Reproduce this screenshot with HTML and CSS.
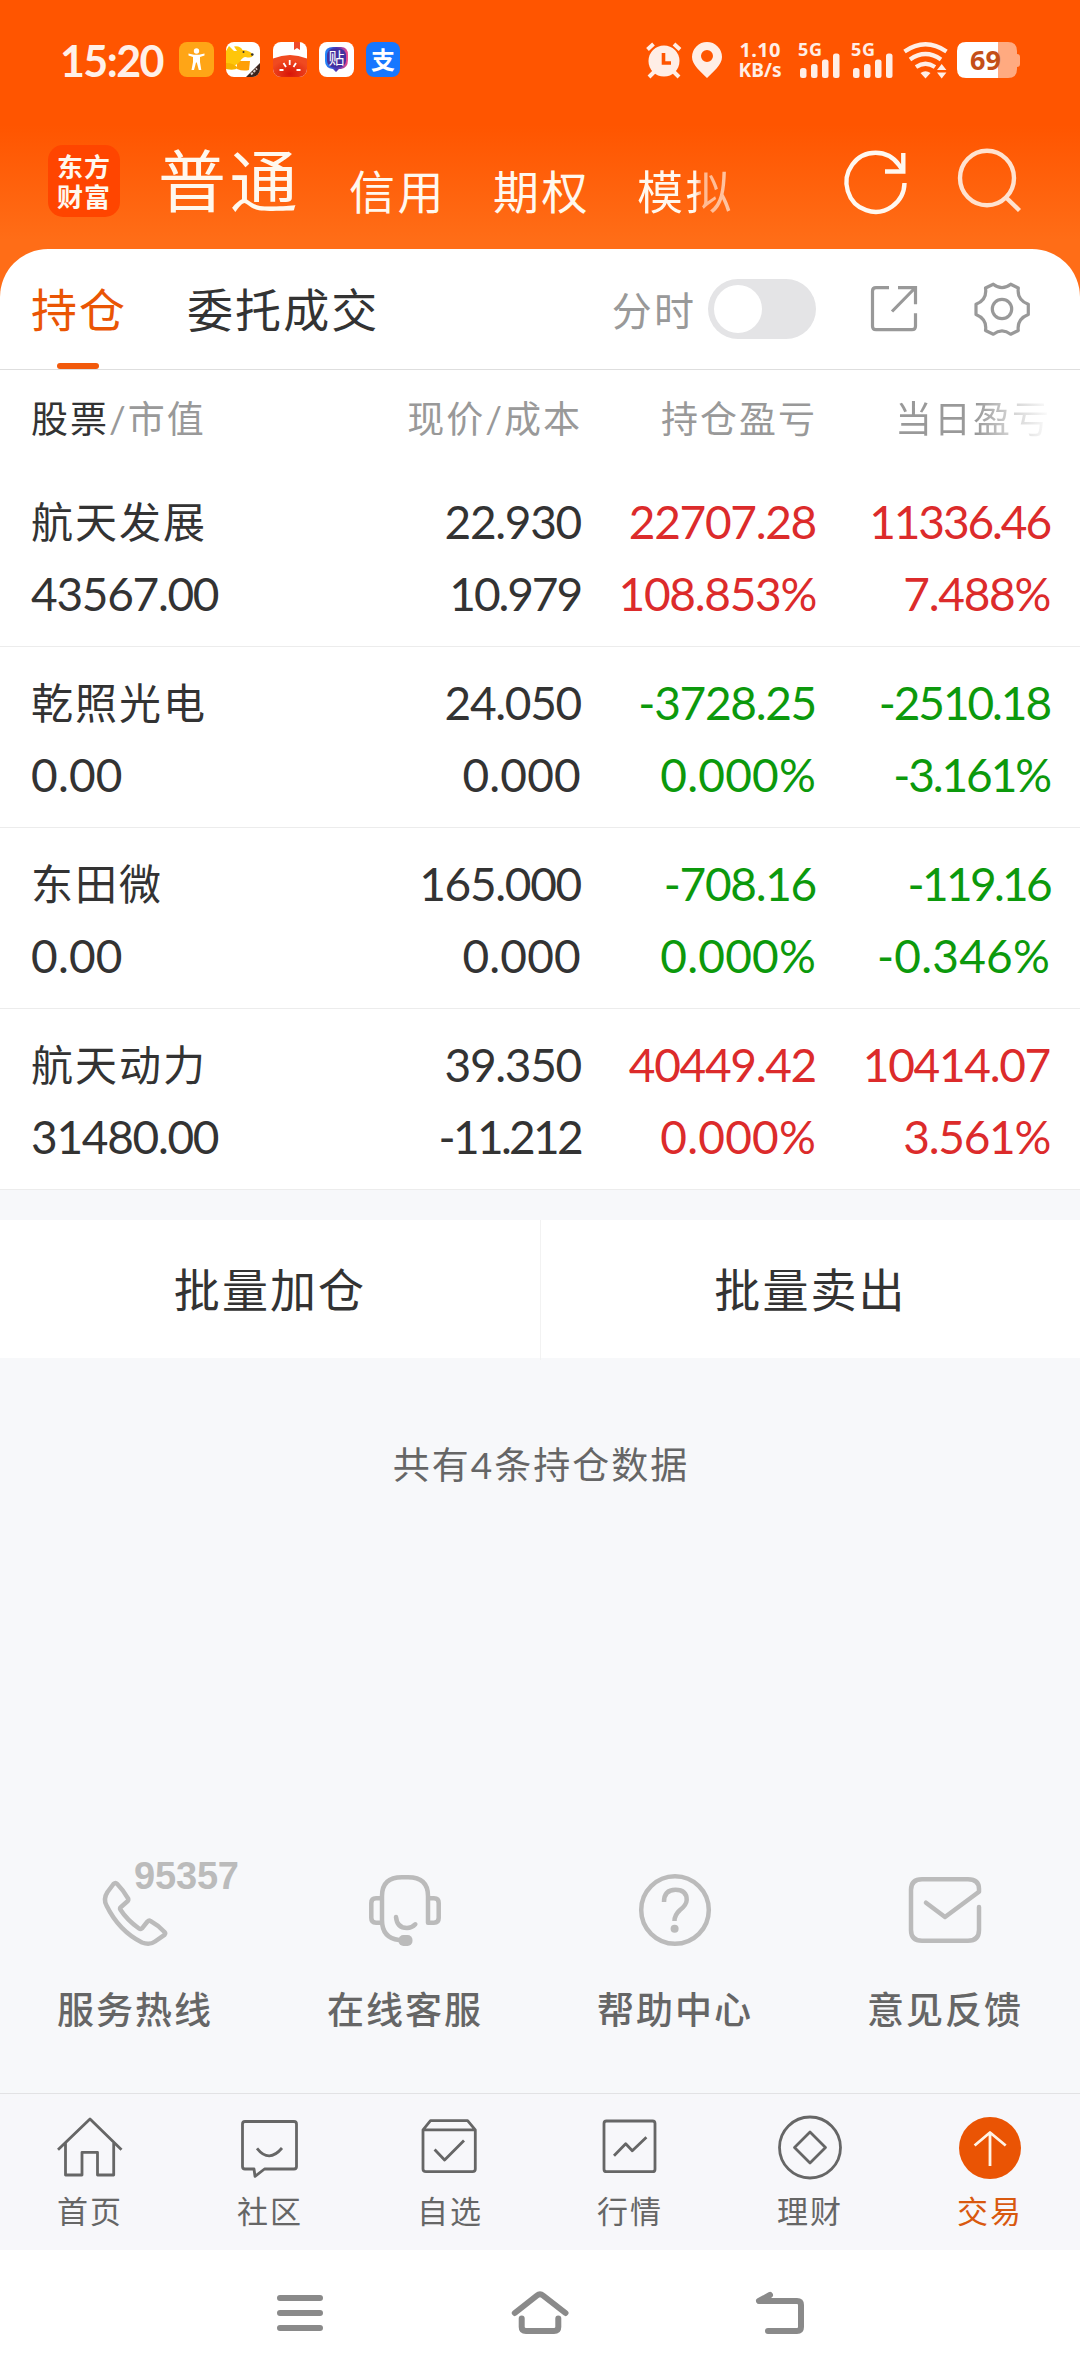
FILE: index.html
```html
<!DOCTYPE html>
<html lang="zh-CN">
<head>
<meta charset="utf-8">
<title>持仓</title>
<link rel="stylesheet" href="styles.css">
</head>
<body>
<div class="phone">
  <header class="top">
    <div class="status">
      <span class="time">15:20</span>
      <svg class="apps" viewBox="179 42 222 36" width="222" height="36">
        <defs>
          <clipPath id="c1"><rect x="226" y="42" width="34" height="35" rx="8"/></clipPath>
          <clipPath id="c2"><rect x="273" y="42" width="34" height="35" rx="8"/></clipPath>
          <linearGradient id="g1" x1="0" y1="0" x2="1" y2="0"><stop offset="0" stop-color="#1f8cff"/><stop offset=".5" stop-color="#4a35b5"/><stop offset="1" stop-color="#f04a8c"/></linearGradient>
          <radialGradient id="g2" cx=".5" cy=".8" r=".6"><stop offset="0" stop-color="#d81508"/><stop offset="1" stop-color="#f04a20"/></radialGradient>
        </defs>
        <rect x="179" y="42" width="35" height="35" rx="8" fill="#ffa516"/>
        <circle cx="196.500" cy="51" r="2.700" fill="#fff"/>
        <path d="M188.500 53.500l5.500 1.300h5l5.500-1.300v2l-4.500 1.500v5l1.300 8h-2.500l-2-7.500h-.800l-2 7.500h-2.500l1.500-8v-5l-4.500-1.500z" fill="#fff"/>
        <g clip-path="url(#c1)">
          <rect x="226" y="42" width="34" height="35" fill="#fff"/>
          <path d="M237 61h13l-1 9q-6 1.500-12-1z" fill="#ffa008"/>
          <path d="M226 51l3-5 5 5 3 0-3-4.500q6-1 8.500 3.500 9 .500 10.500 5.500-1 3-7.500 1.500-3 0-5.500 4.500-4 5-14 5.500z" fill="#ffc60a"/>
          <path d="M226 63q8 0 12 5-4 3-12 1z" fill="#f7b200"/>
          <circle cx="252.300" cy="54.500" r="1.300" fill="#333"/><circle cx="243.500" cy="52" r="1" fill="#333"/>
          <path d="M260 63v15h-15z" fill="#3b241c"/>
          <path d="M251 74.500l6-6" stroke="#d8ccc6" stroke-width="2" stroke-dasharray="2.500 1"/>
        </g>
        <g clip-path="url(#c2)">
          <rect x="273" y="42" width="34" height="35" fill="#fff"/>
          <path d="M273 58.500q17-7 34 0v20h-34z" fill="url(#g2)"/>
          <path d="M294 42h6v8l-3-2-3 2z" fill="#ee4a2a"/>
          <path d="M289.700 60v5M283.500 63l2.500 4M296 63l-2.500 4M279.500 70h4M296.500 70h4" stroke="#fff" stroke-width="1.800"/>
        </g>
        <rect x="319" y="42" width="35" height="35" rx="8" fill="#fff"/>
        <path d="M325 54q0-7 8-7h8q7 0 7 8v5q0 8-7 9h-2l-3 3-3-3q-8-1-8-8z" fill="url(#g1)"/>
        <rect x="327" y="48.500" width="19" height="19" rx="7" fill="#43309f"/>
        <text x="336.500" y="63.500" class="app-char app-tie">贴</text>
        <rect x="366" y="42" width="34" height="35" rx="8" fill="#1677ff"/>
        <text x="383" y="69" class="app-char app-zhi">支</text>
      </svg>
      <svg class="signals" viewBox="644 40 378 40" width="378" height="40" fill="#ffeee6">
        <circle cx="664" cy="61" r="15.500"/>
        <path d="M647.500 49.500l6-5.500M680 49.500l-6-5.500M649 77l5-5M679 77l-5-5" stroke="#ffeee6" stroke-width="4" fill="none"/>
        <path d="M663.500 53v10h7.500" stroke="#ff5500" stroke-width="3.600" fill="none"/>
        <path fill-rule="evenodd" d="M707 42a15 15 0 0 1 15 15c0 8-9 15-15 21-6-6-15-13-15-21a15 15 0 0 1 15-15zm0 8a6 6 0 1 0 0 12 6 6 0 0 0 0-12z"/>
        <text x="760" y="57" class="rate" textLength="41">1.10</text>
        <text x="760" y="77" class="rate" textLength="43" lengthAdjust="spacingAndGlyphs">KB/s</text>
        <text x="810" y="56" class="gen" textLength="24">5G</text>
        <text x="863" y="56" class="gen" textLength="24">5G</text>
        <g id="bars"><rect x="800" y="68" width="6.500" height="10" rx="2.500"/><rect x="811" y="64" width="6.500" height="14" rx="2.500"/><rect x="822" y="59.500" width="6.500" height="18.500" rx="2.500"/><rect x="833" y="53.500" width="6.500" height="24.500" rx="2.500"/></g>
        <use href="#bars" x="53"/>
        <path d="M904.500 51.500q21-14.500 42 0M910 59.500q15.500-11 31 0M916 67q9.500-6.500 19 0" stroke="#ffeee6" stroke-width="4.200" fill="none"/>
        <path d="M920.500 73q5-3.500 10 0l-5 5.500zM937 70l4.700-6 4.700 6zM937 72.500l4.700 6 4.700-6z"/>
        <path d="M966 42h42q9 0 9 9v3q3 0 3 3v7q0 3-3 3v2q0 9-9 9h-42z" fill="#ffaa80"/>
        <path d="M998 42h-32q-9 0-9 9v18q0 9 9 9h32z" fill="#fff"/>
        <text x="985.500" y="70" class="batt" textLength="31">69</text>
      </svg>
    </div>
    <div class="nav">
      <div class="logo"><span>东方</span><span>财富</span></div>
      <nav class="kinds"><span class="kind kind-on">普通</span><span class="kind">信用</span><span class="kind">期权</span><span class="kind kind-fade">模拟</span></nav>
      <svg class="nav-icons" viewBox="840 145 190 75" width="190" height="75" fill="none" stroke-width="4.400">
        <path d="M904.500 183a29 29.500 0 1 1-5.500-18l4.300 6" stroke="#fff8f0"/>
        <path d="M903.300 153v18.500H885" stroke="#fff8f0"/>
        <ellipse cx="987" cy="178" rx="27" ry="27.300" stroke="#ffe2cf"/>
        <path d="M1005.500 197l14 13.500" stroke="#ffe2cf"/>
      </svg>
    </div>
  </header>

  <main class="card">
    <div class="tabs">
      <span class="tab tab-on">持仓</span>
      <span class="tab">委托成交</span>
      <span class="toggle-label">分时</span>
      <span class="toggle"></span>
      <svg class="tab-icons" viewBox="865 279 170 60" width="170" height="60" fill="none" stroke="#999" stroke-width="3.200">
        <path d="M889 287.700h-13q-3.500 0-3.500 3.500v35q0 3.500 3.500 3.500h36q3.500 0 3.500-3.500v-13M898 287.700h17.500v16.500M892 311.500l23-23.500"/>
        <path stroke-linejoin="round" d="M993.300 284.200Q1002 291 1010.700 284.200L1018.300 288C1017 298 1022 302 1028.300 304.300V314.500C1022 317 1017 321 1018.300 330.500L1010.700 334.200Q1002 327.500 993.300 334.200L985.500 330.500C987 321 982 317 976 314.500V304.300C982 302 987 298 985.500 288Z"/>
        <circle cx="1002" cy="309" r="9.700"/>
      </svg>
    </div>
    <div class="grid head"><span><b>股票</b>/市值</span><span>现价/成本</span><span>持仓盈亏</span><span class="fade">当日盈亏</span></div>
    <section class="grid row"><span class="name">航天发展</span><span>22.930</span><span class="up">22707.28</span><span class="up tight">11336.46</span><span>43567.00</span><span class="tight">10.979</span><span class="up">108.853%</span><span class="up">7.488%</span></section>
    <section class="grid row"><span class="name">乾照光电</span><span>24.050</span><span class="down">-3728.25</span><span class="down tight">-2510.18</span><span class="wide">0.00</span><span class="wide">0.000</span><span class="down wide">0.000%</span><span class="down tight">-3.161%</span></section>
    <section class="grid row"><span class="name">东田微</span><span>165.000</span><span class="down">-708.16</span><span class="down tighter">-119.16</span><span class="wide">0.00</span><span class="wide">0.000</span><span class="down wide">0.000%</span><span class="down wide">-0.346%</span></section>
    <section class="grid row"><span class="name">航天动力</span><span>39.350</span><span class="up">40449.42</span><span class="up">10414.07</span><span>31480.00</span><span class="tighter">-11.212</span><span class="up wide">0.000%</span><span class="up">3.561%</span></section>
  </main>

  <div class="batch"><span>批量加仓</span><span>批量卖出</span></div>
  <p class="count">共有4条持仓数据</p>

  <section class="services">
    <div class="service">
      <svg viewBox="27 1856 216 96" width="216" height="96">
        <path d="M113.500 1884L107.500 1892Q103 1899 106.500 1905.500 119 1931 142 1942.500 149.500 1945.500 155 1941.500L164.500 1934.800Q166 1933.300 164.500 1932 158 1925 150.500 1921 149 1920 147.500 1921.500L142 1928.300Q140.500 1929.500 139 1928.500 127 1920 120.500 1909.800 119.500 1908.300 121 1907L127.500 1901.300Q128.800 1900 128 1898.300 123.500 1890.500 117 1883.800 115.500 1882.200 113.500 1884Z"/>
        <text x="134" y="1889" class="hotline" textLength="105">95357</text>
      </svg>
      <span>服务热线</span>
    </div>
    <div class="service">
      <svg viewBox="355 1856 100 96" width="100" height="96">
        <path d="M382 1898.300H376Q371.300 1898.300 371.300 1903V1918Q371.300 1922.700 376 1922.700H382M399 1940Q382 1938 382 1920V1896Q382 1877.300 402 1877.300H408Q428 1877.300 428 1896V1922.700H434Q438.700 1922.700 438.700 1918V1903Q438.700 1898.300 434 1898.300H428M396 1917Q397 1928 407 1928 412 1928 415.300 1924.300"/>
        <rect x="398.500" y="1935" width="14" height="11" rx="5" class="solid"/>
      </svg>
      <span>在线客服</span>
    </div>
    <div class="service">
      <svg viewBox="625 1856 100 96" width="100" height="96">
        <circle cx="675" cy="1910" r="33.800"/>
        <path stroke-linecap="butt" d="M664 1902Q664 1889.700 675.500 1889.700 686.700 1889.700 686.700 1900 686.500 1905 680 1910 674.500 1915 674.500 1921"/>
        <circle cx="674.600" cy="1928.700" r="4" class="solid"/>
      </svg>
      <span>帮助中心</span>
    </div>
    <div class="service">
      <svg viewBox="895 1856 100 96" width="100" height="96">
        <path d="M979 1907V1930Q979 1940.700 968 1940.700H922Q911 1940.700 911 1930V1890Q911 1879.200 922 1879.200H968Q979 1879.200 979 1889V1891.700L945 1917 926 1902.700"/>
      </svg>
      <span>意见反馈</span>
    </div>
  </section>

  <nav class="tabbar">
    <div class="item"><svg viewBox="55 2113 70 68" width="70" height="68"><path d="M58 2149.700L90 2119 121.500 2149.700M65.500 2143V2175H82V2152.300H97.500V2175H113.700V2143"/></svg><span>首页</span></div>
    <div class="item"><svg viewBox="235 2113 70 68" width="70" height="68"><path d="M254 2169H245Q242.500 2169 242.500 2166.500V2124Q242.500 2121.500 245 2121.500H294Q296.500 2121.500 296.500 2124V2166.500Q296.500 2169 294 2169H264.500L255 2176.300ZM257 2148.300Q269 2163.500 282 2148"/></svg><span>社区</span></div>
    <div class="item"><svg viewBox="415 2113 70 68" width="70" height="68"><path d="M423 2129.800V2169Q423 2171.700 426 2171.700H472.500Q475.300 2171.700 475.300 2169V2129.800L467.600 2120.700H430.500ZH475.300M434.600 2149.500L444.600 2160 464 2140.500"/></svg><span>自选</span></div>
    <div class="item"><svg viewBox="595 2113 70 68" width="70" height="68"><rect x="604" y="2121" width="51" height="50.700" rx="2.500"/><path d="M614 2155.700L625.700 2143.700 632.300 2150.700 646.400 2137.300"/></svg><span>行情</span></div>
    <div class="item"><svg viewBox="774.500 2113 70 68" width="70" height="68"><circle cx="809.500" cy="2147.500" r="30.500"/><path d="M809.500 2132L825 2147.500 809.500 2163 794 2147.500Z"/></svg><span>理财</span></div>
    <div class="item item-on"><svg viewBox="955 2113 70 68" width="70" height="68"><circle cx="990" cy="2148" r="31" fill="#ea5404" stroke="none"/><path stroke="#fff3e6" d="M990 2166V2133M974.600 2145.500L990 2132.500 1005.700 2145.500"/></svg><span>交易</span></div>
  </nav>

  <footer class="sysnav">
    <svg viewBox="270 2280 540 66" width="540" height="66">
      <path d="M280 2298H320M280 2313H320M280 2328H320"/>
      <path d="M514.800 2313L537 2295.500Q540 2293 543 2295.500L565.500 2313M521.700 2318.500V2327Q521.700 2331 526 2331H554Q558.300 2331 558.300 2327V2318.500"/>
      <path d="M770 2295L759 2301H797Q801 2301 801 2305V2327Q801 2331 797 2331H768"/>
    </svg>
  </footer>
</div>
</body>
</html>
```
FILE: styles.css
```css
* { box-sizing: border-box; }
body {
  margin: 0;
  font-family: Lato, "Noto Sans CJK SC", sans-serif;
  color: #333;
  background: #f7f8fa;
}
svg { display: block; flex: none; }
.phone {
  width: 1080px;
  height: 2376px;
  display: flex;
  flex-direction: column;
  overflow: hidden;
  white-space: nowrap;
}

/* Orange header */
.top {
  height: 305px;
  flex: none;
  background: linear-gradient(#ff5500 0, #ff5500 125px, #ff6d17 240px, #ff6d17 100%);
}
.status {
  height: 120px;
  padding: 0 58px 0 60px;
  display: flex;
  align-items: center;
}
.time {
  width: 119px;
  font-size: 43px;
  font-weight: 700;
  letter-spacing: -1.6px;
  color: #fff0e8;
}
.signals { margin-left: auto; overflow: visible; }
.app-char {
  font-family: "Noto Sans CJK SC", sans-serif;
  font-weight: 700;
  text-anchor: middle;
  fill: #fff;
}
.app-tie { font-size: 16px; font-weight: 400; }
.app-zhi { font-size: 24px; }
.rate, .gen, .batt {
  font-family: "Noto Sans", sans-serif;
  font-weight: 700;
  text-anchor: middle;
}
.rate { font-size: 20px; }
.gen { font-size: 18px; }
.batt { font-size: 27px; fill: #c44f18; }

.nav {
  height: 128px;
  padding: 0 50px 0 48px;
  display: flex;
  align-items: center;
}
.logo {
  width: 72px;
  height: 72px;
  margin-bottom: 6px;
  border-radius: 15px;
  background: #ff4500;
  display: flex;
  flex-direction: column;
  align-items: center;
  justify-content: center;
  color: #fff8ee;
  font-family: "Noto Sans CJK SC", sans-serif;
  font-size: 26px;
  line-height: 30px;
  font-weight: 700;
  letter-spacing: 1px;
}
.kinds {
  margin-left: 38px;
  display: flex;
  align-items: baseline;
  color: #fff8ee;
  font-size: 46px;
  letter-spacing: 2.400px;
}
.kind {
  width: 144px;
  line-height: 100px;
}
.kind + .kind { transform: translateY(3px); }
.kind-on {
  width: 191px;
  font-size: 68px;
  letter-spacing: 3.500px;
  transform: translateY(1px);
}
.kind-fade {
  color: transparent;
  background: linear-gradient(90deg, #fff8ee 58px, #ffb890 64px, #ffc7a6 100px);
  -webkit-background-clip: text;
  background-clip: text;
}
.nav-icons { margin-left: auto; margin-bottom: 3px; }

/* White card */
.card {
  flex: none;
  margin-top: -56px;
  background: #fff;
  border-radius: 48px 48px 0 0;
}
.tabs {
  height: 121px;
  padding: 0 45px 0 31px;
  border-bottom: 1px solid #dedede;
  display: flex;
  align-items: center;
  font-size: 46px;
  letter-spacing: 2.100px;
}
.tab {
  height: 120px;
  line-height: 122px;
  margin-right: 60px;
}
.tab-on {
  position: relative;
  width: 96px;
  color: #ea5504;
}
.tab-on::after {
  content: "";
  position: absolute;
  left: 26px;
  bottom: 0;
  width: 42px;
  height: 6px;
  border-radius: 3px;
  background: #f25a0c;
}
.toggle-label {
  margin-left: auto;
  font-size: 40px;
  color: #999;
}
.toggle {
  width: 108px;
  height: 60px;
  margin: 0 49px 0 12px;
  padding: 6px;
  border-radius: 30px;
  background: #e4e4e6;
}
.toggle::before {
  content: "";
  display: block;
  width: 48px;
  height: 48px;
  border-radius: 50%;
  background: #fff;
}

.grid {
  display: grid;
  grid-template-columns: 280px 270px 235px 234px;
  padding-left: 31px;
  text-align: right;
}
.grid > :nth-child(4n+1) { text-align: left; }
.head {
  height: 96px;
  line-height: 98px;
  font-size: 37px;
  letter-spacing: 2px;
  color: #999;
}
.head b { font-weight: 400; color: #333; }
.head > span + span { margin-right: -1px; }
.fade {
  color: transparent;
  background: linear-gradient(90deg, #999 160px, #ccc 190px, #fff 236px);
  -webkit-background-clip: text;
  background-clip: text;
}
.row {
  height: 181px;
  padding-top: 20px;
  grid-template-rows: 72px 72px;
  line-height: 72px;
  font-size: 46px;
  font-variant-numeric: tabular-nums;
  letter-spacing: -1.300px;
  border-bottom: 1px solid #ececec;
}
.row .name { font-size: 42px; letter-spacing: 2px; }
.row .wide { letter-spacing: .2px; }
.row .tight { letter-spacing: -2.100px; }
.row .tighter { letter-spacing: -2.700px; }
.up { color: #dc2b2b; }
.down { color: #0c990c; }

.batch {
  flex: none;
  height: 138px;
  margin-top: 30px;
  background: #fff;
  display: grid;
  grid-template-columns: 1fr 1fr;
  text-align: center;
  line-height: 140px;
  font-size: 46px;
  letter-spacing: 2.100px;
}
.batch span + span { border-left: 1px solid #f2f2f2; }
.count {
  margin: 77px 0 0;
  padding-left: 2px;
  text-align: center;
  line-height: 60px;
  font-size: 37px;
  letter-spacing: 2px;
  color: #666;
}

/* Service shortcuts */
.services {
  margin-top: auto;
  height: 237px;
  flex: none;
  display: grid;
  grid-template-columns: repeat(4, 1fr);
}
.service {
  display: flex;
  flex-direction: column;
  align-items: center;
  gap: 28px;
  font-size: 37px;
  font-weight: 500;
  line-height: 60px;
  letter-spacing: 2px;
  color: #666;
}
.service svg {
  fill: none;
  stroke: #bbb;
  stroke-width: 4.500px;
  stroke-linecap: round;
  stroke-linejoin: round;
}
.service .solid { fill: #bbb; stroke: none; }
.service .hotline {
  font-family: "Liberation Sans", sans-serif;
  font-size: 38px;
  font-weight: 700;
  letter-spacing: 0;
  fill: #bbb;
  stroke: none;
}

.tabbar {
  flex: none;
  height: 157px;
  border-top: 1px solid #e2e2e4;
  background: #f7f7fa;
  display: grid;
  grid-template-columns: repeat(6, 1fr);
}
.item {
  padding-top: 19px;
  display: flex;
  flex-direction: column;
  align-items: center;
  gap: 7px;
  font-size: 31px;
  letter-spacing: 2px;
  line-height: 46px;
  color: #666;
}
.item svg {
  fill: none;
  stroke: #666;
  stroke-width: 2.800px;
  stroke-linejoin: round;
}
.item-on { color: #d9590f; }

.sysnav {
  flex: none;
  height: 126px;
  padding-top: 30px;
  background: #fff;
  display: flex;
  justify-content: center;
}
.sysnav svg {
  fill: none;
  stroke: #8a8a8a;
  stroke-width: 6px;
  stroke-linecap: round;
  stroke-linejoin: round;
}
```
